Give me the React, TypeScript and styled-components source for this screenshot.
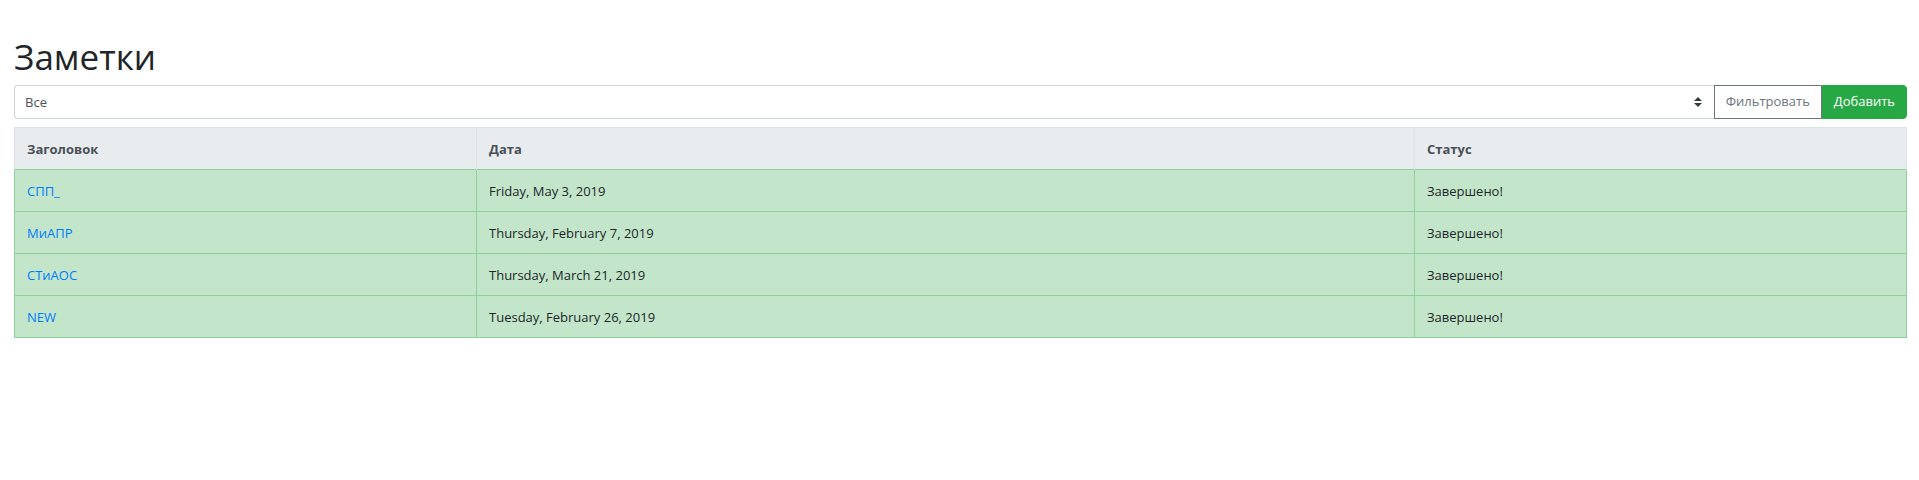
import React from "react";
import styled, { createGlobalStyle } from "styled-components";

const GlobalStyle = createGlobalStyle`
  html, body { margin: 0; padding: 0; background: #fff; }
  body {
    font-family: "Open Sans", "Noto Sans", "Liberation Sans", sans-serif;
    font-size: 13px;
    line-height: 1.5;
    color: #212529;
  }
  * { box-sizing: border-box; }
`;

const Page = styled.div`
  padding: 0 12px 0 14px;
`;

const Title = styled.h1`
  margin: 36px 0 7px;
  font-size: 35px;
  font-weight: 500;
  line-height: 42px;
  color: #212529;
`;

const InputGroup = styled.div`
  display: flex;
  height: 34px;
  margin-bottom: 8px;
`;

const SelectWrap = styled.div`
  position: relative;
  flex: 1;
  display: flex;
`;

const Select = styled.select`
  flex: 1;
  appearance: none;
  -webkit-appearance: none;
  height: 34px;
  padding: 0 28px 0 10px;
  font-family: inherit;
  font-size: 13px;
  color: #495057;
  background: #fff;
  border: 1px solid #ced4da;
  border-right: 0;
  border-radius: 4px 0 0 4px;
  outline: none;
`;

const Caret = styled.svg`
  position: absolute;
  right: 12px;
  top: 50%;
  width: 8px;
  height: 10px;
  margin-top: -5px;
  pointer-events: none;
`;

const Button = styled.button<{ $variant: "outline" | "success" }>`
  height: 34px;
  padding: 0 11px;
  font-family: inherit;
  font-size: 13px;
  line-height: 1.5;
  cursor: pointer;
  border: 1px solid
    ${(p) => (p.$variant === "success" ? "#28a745" : "#6c757d")};
  background: ${(p) => (p.$variant === "success" ? "#28a745" : "#fff")};
  color: ${(p) => (p.$variant === "success" ? "#fff" : "#6c757d")};
  border-radius: ${(p) => (p.$variant === "success" ? "0 4px 4px 0" : "0")};
`;

const Table = styled.table`
  width: 100%;
  border-collapse: collapse;
  table-layout: fixed;
`;

const HeadCell = styled.th`
  text-align: left;
  padding: 12px 12px 11px;
  line-height: 18px;
  font-weight: 700;
  color: #495057;
  background: #e9ecef;
  border: 1px solid #dee2e6;
  border-bottom: 0;
`;

const Row = styled.tr`
  background: #c3e6cb;
`;

const Cell = styled.td`
  padding: 12px 12px 11px;
  line-height: 18px;
  color: #212529;
  border: 1px solid #8fd19e;
`;

const NoteLink = styled.a`
  color: #007bff;
  text-decoration: none;
`;

const notes = [
  { title: "СПП_", date: "Friday, May 3, 2019", status: "Завершено!" },
  { title: "МиАПР", date: "Thursday, February 7, 2019", status: "Завершено!" },
  { title: "СТиАОС", date: "Thursday, March 21, 2019", status: "Завершено!" },
  { title: "NEW", date: "Tuesday, February 26, 2019", status: "Завершено!" },
];

export default function App() {
  return (
    <>
      <GlobalStyle />
      <Page>
        <Title>Заметки</Title>
        <InputGroup>
          <SelectWrap>
            <Select defaultValue="all">
              <option value="all">Все</option>
              <option value="done">Завершено</option>
            </Select>
            <Caret viewBox="0 0 4 5">
              <path fill="#343a40" d="M2 0L0 2h4zm0 5L0 3h4z" />
            </Caret>
          </SelectWrap>
          <Button $variant="outline">Фильтровать</Button>
          <Button $variant="success">Добавить</Button>
        </InputGroup>
        <Table>
          <colgroup>
            <col style={{ width: 462 }} />
            <col style={{ width: 938 }} />
            <col />
          </colgroup>
          <thead>
            <tr>
              <HeadCell>Заголовок</HeadCell>
              <HeadCell>Дата</HeadCell>
              <HeadCell>Статус</HeadCell>
            </tr>
          </thead>
          <tbody>
            {notes.map((n) => (
              <Row key={n.title}>
                <Cell>
                  <NoteLink href="#">{n.title}</NoteLink>
                </Cell>
                <Cell>{n.date}</Cell>
                <Cell>{n.status}</Cell>
              </Row>
            ))}
          </tbody>
        </Table>
      </Page>
    </>
  );
}
